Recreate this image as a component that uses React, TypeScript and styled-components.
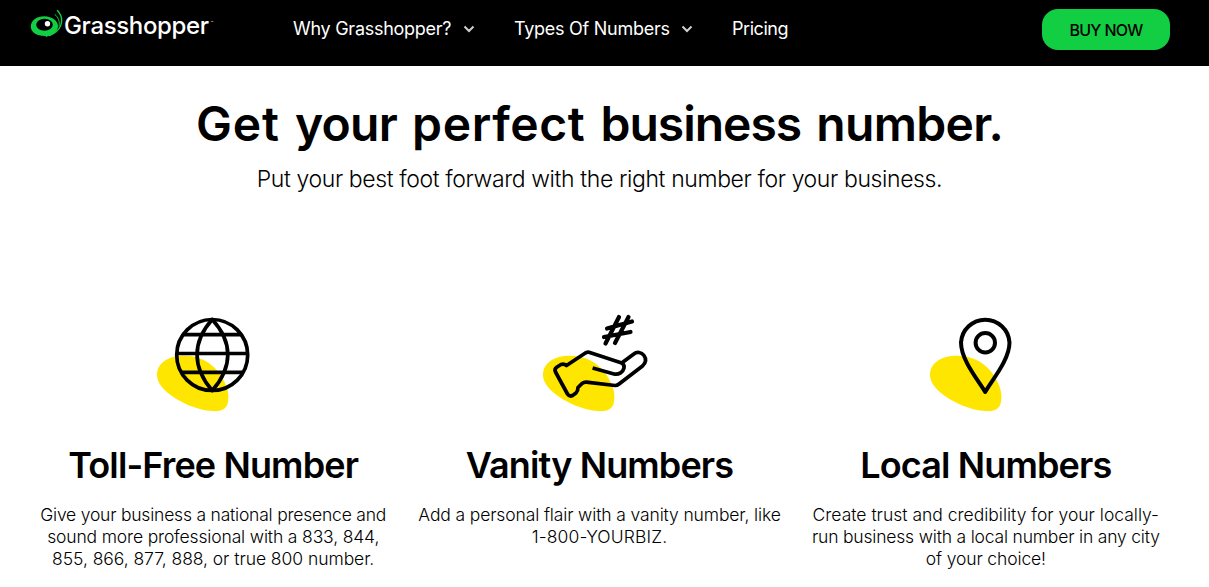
import React from 'react';
import styled, { createGlobalStyle } from 'styled-components';

const GlobalStyle = createGlobalStyle`
  * {
    box-sizing: border-box;
  }

  body {
    margin: 0;
    overflow: hidden;
    background: #fff;
    color: #000;
    font-family: Inter, 'Liberation Sans', sans-serif;
  }
`;

const HeaderBar = styled.header`
  display: flex;
  align-items: center;
  height: 66px;
  padding: 0 39px 8px 30px;
  background: #000;
`;

const LogoLink = styled.a`
  display: flex;
  align-items: center;
  width: 263px;
  color: #fff;
`;

const LogoText = styled.span`
  font-size: 24px;
  font-weight: 500;
  line-height: 32px;
  letter-spacing: -0.35px;
  white-space: nowrap;
  margin: -6px 0 0 0;
`;

const TradeMark = styled.sup`
  font-size: 4px;
  line-height: 1;
  margin: -12px 0 0 2px;
`;

const Nav = styled.nav`
  display: flex;
  flex: 1;
  align-items: center;
  margin-top: -1px;
`;

const NavItem = styled.a<{ $width: number; $spacing: number }>`
  display: flex;
  align-items: center;
  justify-content: space-between;
  width: ${({ $width }) => $width}px;
  margin-right: 39px;
  color: #fff;
  font-size: 18px;
  line-height: 24px;
  letter-spacing: ${({ $spacing }) => $spacing}px;
  white-space: nowrap;
`;

const BuyButton = styled.button`
  width: 128px;
  height: 41px;
  padding: 1px 0 0;
  border: 0;
  border-radius: 16px;
  background: #12ce43;
  color: #000;
  font-family: inherit;
  font-size: 16px;
  font-weight: 500;
  letter-spacing: -0.7px;
`;

const Main = styled.main`
  display: flex;
  flex-direction: column;
  align-items: center;
  width: 1199px;
  padding: 28px 20px 0;
`;

const Title = styled.h1`
  margin: 0;
  font-size: 48px;
  font-weight: 600;
  line-height: 60px;
  white-space: nowrap;
  word-spacing: 3px;
`;

const Word = styled.span<{ $spacing: number }>`
  letter-spacing: ${({ $spacing }) => $spacing}px;
`;

const Subtitle = styled.p`
  margin: 10px 0 0;
  font-size: 23px;
  font-weight: 300;
  line-height: 30px;
  letter-spacing: -0.39px;
  white-space: nowrap;
`;

const Columns = styled.section`
  display: grid;
  grid-template-columns: repeat(3, 1fr);
  width: 100%;
  margin-top: 106px;
`;

const Column = styled.article`
  display: flex;
  flex-direction: column;
  align-items: center;
  text-align: center;
`;

const ColumnTitle = styled.h2`
  margin: 21px 0 0;
  font-size: 36px;
  font-weight: 600;
  line-height: 48px;
  letter-spacing: -0.87px;
  white-space: nowrap;
`;

const ColumnText = styled.p`
  margin: 15px 0 0;
  font-size: 17.5px;
  font-weight: 300;
  line-height: 22px;
`;

const Line = styled.span<{ $spacing: number }>`
  display: block;
  letter-spacing: ${({ $spacing }) => $spacing}px;
  white-space: nowrap;
`;

const LogoMark = () => (
  <svg width="34" height="42" viewBox="30 8 34 42" fill="none">
    <path
      d="M30.800 26.500C30.800 20 37.500 16 44.500 16.200C52 16.500 57.800 20.500 58 26C58.200 30.500 54 33.500 50 35.200L45.500 37.200L46 36C37.500 36.500 30.800 32.500 30.800 26.500Z"
      fill="#12ce43"
    />
    <ellipse cx="44.500" cy="24.700" rx="8.300" ry="6" fill="#000" />
    <circle cx="47.500" cy="23.700" r="2.700" fill="#fff" />
    <g stroke="#12ce43" strokeLinecap="round">
      <path d="M57.500 10.500C61.500 15 62.500 21 60.500 26C58.500 30.500 54.500 33.500 49.500 35.500" strokeWidth="1.400" />
      <path d="M55 14.500C58.500 17.500 60 21.500 59 26" strokeWidth="1" />
    </g>
  </svg>
);

const Chevron = () => (
  <svg width="12" height="8" viewBox="0 0 12 8" fill="none" stroke="#d0d0d0" strokeWidth="2">
    <path d="M1.500 1.500 6 6l4.500-4.500" />
  </svg>
);

const Blob = () => (
  <path
    d="M-56 75C-56 63-45 55.500-28 55.700C-9 56 5 67 12 83C16 91 16 99 14.500 104C12 112 3 112-9 110C-25 107-56 92-56 75Z"
    fill="#ffe600"
  />
);

const IconFrame: React.FC<{ children: React.ReactNode }> = ({ children }) => (
  <svg
    width="120"
    height="120"
    viewBox="-60 0 120 120"
    fill="none"
    stroke="#000"
    strokeWidth="3.700"
    strokeLinejoin="round"
  >
    <g stroke="none">
      <Blob />
    </g>
    {children}
  </svg>
);

const GlobeIcon = () => (
  <IconFrame>
    <circle cx="-.8" cy="55" r="35.500" />
    <path d="M-.8 19.500C-21 42-21 67-.8 90.500C20 67 20 42-.8 19.500Z" />
    <path d="M-31 34.700H29M-36 53.500H34M-31 72.300H29" />
  </IconFrame>
);

const HandIcon = () => (
  <IconFrame>
    <path d="M-6.400 68 15 74C20 75 24 72 25 68C25.500 65 24.500 63.500 22 62.700L-10 52.300Q-12 51.800-14 53.300L-32.500 65.500Q-35 63.500-38 64.500L-42 67Q-45 69-43.500 72L-31.500 94Q-29.500 97-26.500 95.500L-23 93Q-21 91-21 87.500L-17 83.500Q-15 82-12.500 82.200L16 85.500Q18 85.600 20 84L43.500 66C46.500 63 47.500 59 45 55.500C42.500 52 38 51.500 34.500 54.200L23 62.700" />
    <path
      d="M20 17 6.500 43.500M29.500 17 16 43M8 28.500 33 21.500M5 37 31.500 32"
      strokeWidth="4.200"
      strokeLinecap="round"
    />
  </IconFrame>
);

const PinIcon = () => (
  <IconFrame>
    <path
      d="M-.8 92C-8 80-25 60-25 42.500A24.300 24.300 0 0 1 23.500 42.500C23.500 60 6 80-.8 92Z"
      strokeWidth="4"
    />
    <circle cx="-.7" cy="42.700" r="9.700" strokeWidth="4" />
  </IconFrame>
);

const titleWords = [
  { text: 'Get', spacing: 0.9 },
  { text: 'your', spacing: -0.75 },
  { text: 'perfect', spacing: 0.6 },
  { text: 'business', spacing: -1 },
  { text: 'number.', spacing: -0.7 },
];

const columns = [
  {
    title: 'Toll-Free Number',
    icon: <GlobeIcon />,
    lines: [
      { text: 'Give your business a national presence and', spacing: -0.21 },
      { text: 'sound more professional with a 833, 844,', spacing: -0.15 },
      { text: '855, 866, 877, 888, or true 800 number.', spacing: -0.05 },
    ],
  },
  {
    title: 'Vanity Numbers',
    icon: <HandIcon />,
    lines: [
      { text: 'Add a personal flair with a vanity number, like', spacing: -0.13 },
      { text: '1-800-YOURBIZ.', spacing: 0.14 },
    ],
  },
  {
    title: 'Local Numbers',
    icon: <PinIcon />,
    lines: [
      { text: 'Create trust and credibility for your locally-', spacing: 0 },
      { text: 'run business with a local number in any city', spacing: -0.19 },
      { text: 'of your choice!', spacing: -0.13 },
    ],
  },
];

const App: React.FC = () => {
  return (
    <>
      <GlobalStyle />
      <HeaderBar>
        <LogoLink>
          <LogoMark />
          <LogoText>Grasshopper</LogoText>
          <TradeMark>™</TradeMark>
        </LogoLink>
        <Nav>
          <NavItem $width={182} $spacing={-0.27}>
            Why Grasshopper? <Chevron />
          </NavItem>
          <NavItem $width={179} $spacing={-0.27}>
            Types Of Numbers <Chevron />
          </NavItem>
          <NavItem $width={56} $spacing={-0.45}>
            Pricing
          </NavItem>
        </Nav>
        <BuyButton>BUY NOW</BuyButton>
      </HeaderBar>
      <Main>
        <Title>
          {titleWords.map(({ text, spacing }, i) => (
            <React.Fragment key={text}>
              {i > 0 && ' '}
              <Word $spacing={spacing}>{text}</Word>
            </React.Fragment>
          ))}
        </Title>
        <Subtitle>Put your best foot forward with the right number for your business.</Subtitle>
        <Columns>
          {columns.map(({ title, icon, lines }) => (
            <Column key={title}>
              {icon}
              <ColumnTitle>{title}</ColumnTitle>
              <ColumnText>
                {lines.map(line => (
                  <Line key={line.text} $spacing={line.spacing}>
                    {line.text}
                  </Line>
                ))}
              </ColumnText>
            </Column>
          ))}
        </Columns>
      </Main>
    </>
  );
};

export default App;
